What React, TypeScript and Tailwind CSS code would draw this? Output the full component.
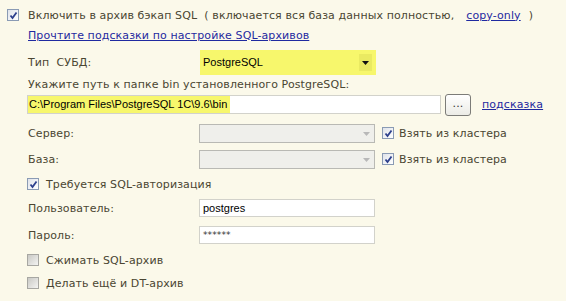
import React from 'react';

const text = "text-[#4a4632]";

function Check({ checked }: { checked?: boolean }) {
  return (
    <span
      className={`inline-flex h-[12px] w-[12px] shrink-0 items-center justify-center border ${
        checked
          ? 'border-[#8a9bb4] bg-gradient-to-br from-[#dfe3ea] to-[#ffffff]'
          : 'border-[#a7a7a2] bg-gradient-to-br from-[#c9c9c5] to-[#f4f4f2]'
      }`}
    >
      {checked && (
        <svg width="9" height="9" viewBox="0 0 9 9">
          <path d="M1.5 4.5 L3.5 7 L7.5 1.5" stroke="#2c3f8c" strokeWidth="1.8" fill="none" />
        </svg>
      )}
    </span>
  );
}

function DisabledSelect() {
  return (
    <div className="flex h-[19px] w-[176px] items-center justify-end border border-[#b9b9b4] bg-[#efefeb] pr-[4px]">
      <svg width="7" height="4" viewBox="0 0 7 4">
        <path d="M0 0 H7 L3.5 4 Z" fill="#b8b8b8" />
      </svg>
    </div>
  );
}

export default function App() {
  return (
    <div
      className={`h-[301px] w-[566px] overflow-hidden bg-[#fbf9ea] text-[11px] leading-none tracking-[0.1px] ${text}`}
      style={{ fontFamily: '"DejaVu Sans", Verdana, sans-serif' }}
    >
      {/* top toggle */}
      <div className="flex h-[30px] items-center pl-[7px]">
        <Check checked />
        <span className="ml-[9px] whitespace-pre">
          {'Включить в архив бэкап SQL  ( включается вся база данных полностью,'}
          <a className="ml-[12px] text-[#1f2aa0] underline">copy-only</a>
          <span className="ml-[8px]">)</span>
        </span>
      </div>

      <div className="flex h-[10px] items-center pl-[28px]">
        <a className="text-[#1f2aa0] underline">Прочтите подсказки по настройке SQL-архивов</a>
      </div>

      {/* dbms type */}
      <div className="mt-[10px] flex h-[25px] items-center pl-[28px]">
        <span className="w-[172px] whitespace-pre">Тип  СУБД:</span>
        <div className="flex h-[25px] w-[176px] items-center justify-between bg-[#f7f76c] pl-[3px] pr-[4px]">
          <span className="text-[11px] tracking-normal text-black" style={{ fontFamily: '"Liberation Sans", Arial, sans-serif' }}>
            PostgreSQL
          </span>
          <span className="flex h-[17px] w-[13px] items-center justify-center bg-[#eaea62]">
            <svg width="7" height="4" viewBox="0 0 7 4">
              <path d="M0 0 H7 L3.5 4 Z" fill="#111" />
            </svg>
          </span>
        </div>
      </div>

      <div className="flex h-[18px] items-center pl-[28px]">
        Укажите путь к папке bin установленного PostgreSQL:
      </div>

      {/* bin path */}
      <div className="flex h-[23px] items-center pl-[27px]">
        <div className="flex h-[19px] w-[414px] items-center border border-[#d2d2cb] bg-white">
          <span
            className="flex h-[17px] items-center bg-[#f7f76c] pl-[1px] pr-[3px] text-[11px] tracking-normal text-black"
            style={{ fontFamily: '"Liberation Sans", Arial, sans-serif' }}
          >
            C:\Program Files\PostgreSQL 1C\9.6\bin
          </span>
        </div>
        <button className="ml-[4px] flex h-[22px] w-[26px] items-center justify-center rounded-[3px] border border-[#7c7c78] bg-gradient-to-b from-white to-[#ecece6] pb-[3px] text-[11px] text-[#333]">
          ...
        </button>
        <a className="ml-[11px] text-[#1f2aa0] underline">подсказка</a>
      </div>

      {/* server */}
      <div className="mt-[8px] flex h-[19px] items-center pl-[28px]">
        <span className="w-[171px]">Сервер:</span>
        <DisabledSelect />
        <span className="ml-[7px]">
          <Check checked />
        </span>
        <span className="ml-[5px]">Взять из кластера</span>
      </div>

      <div className="mt-[7px] flex h-[19px] items-center pl-[28px]">
        <span className="w-[171px]">База:</span>
        <DisabledSelect />
        <span className="ml-[7px]">
          <Check checked />
        </span>
        <span className="ml-[5px]">Взять из кластера</span>
      </div>

      <div className="flex h-[30px] items-center pl-[27px]">
        <Check checked />
        <span className="ml-[7px]">Требуется SQL-авторизация</span>
      </div>

      {/* credentials */}
      <div className="flex h-[18px] items-center pl-[28px]">
        <span className="w-[171px]">Пользователь:</span>
        <div
          className="flex h-[18px] w-[176px] items-center border border-[#d2d2cb] bg-white pl-[3px] text-[11px] tracking-normal text-black"
          style={{ fontFamily: '"Liberation Sans", Arial, sans-serif' }}
        >
          postgres
        </div>
      </div>

      <div className="mt-[9px] flex h-[18px] items-center pl-[28px]">
        <span className="w-[171px]">Пароль:</span>
        <div className="flex h-[18px] w-[176px] items-center border border-[#d2d2cb] bg-white pl-[3px] text-[9px] text-[#333]">
          ******
        </div>
      </div>

      <div className="mt-[10px] flex h-[12px] items-center pl-[27px]">
        <Check />
        <span className="ml-[7px]">Сжимать SQL-архив</span>
      </div>

      <div className="mt-[11px] flex h-[12px] items-center pl-[27px]">
        <Check />
        <span className="ml-[7px]">Делать ещё и DT-архив</span>
      </div>
    </div>
  );
}
